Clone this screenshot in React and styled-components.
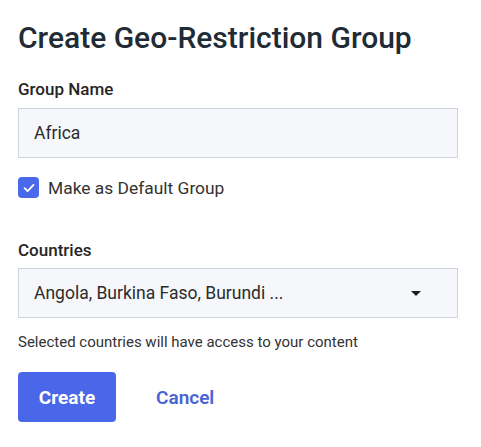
import React from "react";
import styled, { createGlobalStyle } from "styled-components";

const Global = createGlobalStyle`
  html, body { margin: 0; padding: 0; background: #ffffff; }
  body { font-family: Roboto, "Noto Sans", Arial, sans-serif; color: #1f2733; }
  * { box-sizing: border-box; }
`;

const Page = styled.div`
  width: 481px;
  padding: 19px 18px 0 18px;
  display: flex;
  flex-direction: column;
`;

const Title = styled.h1`
  margin: 0;
  font-size: 30px;
  line-height: 38px;
  font-weight: 500;
  color: #212b36;
`;

const Label = styled.label`
  display: block;
  font-size: 17px;
  line-height: 20px;
  font-weight: 500;
  color: #262626;
  margin-top: ${(p) => p.$top}px;
  margin-bottom: ${(p) => p.$bottom}px;
`;

const Field = styled.div`
  width: 440px;
  height: 50px;
  background: #f5f7fa;
  border: 1px solid #cfd5de;
  display: flex;
  align-items: center;
  justify-content: space-between;
  padding: 0 36px 0 15px;
  font-size: 17.5px;
  color: #2c2c2c;
`;

const CheckRow = styled.div`
  display: flex;
  align-items: center;
  gap: 9px;
  margin-top: 19px;
  font-size: 17.4px;
  color: #333;
`;

const Box = styled.span`
  width: 21px;
  height: 21px;
  border-radius: 4px;
  background: #4a68ea;
  display: flex;
  align-items: center;
  justify-content: center;
`;

const Caret = styled.span`
  width: 0;
  height: 0;
  border-left: 5px solid transparent;
  border-right: 5px solid transparent;
  border-top: 5px solid #1f1f1f;
`;

const Help = styled.p`
  margin: 15px 0 0 0;
  font-size: 15px;
  line-height: 18px;
  color: #333;
`;

const Actions = styled.div`
  display: flex;
  align-items: center;
  gap: 40px;
  margin-top: 21px;
`;

const Primary = styled.button`
  width: 98px;
  height: 50px;
  border: none;
  border-radius: 4px;
  background: #4a67ea;
  color: #fff;
  font-family: inherit;
  font-size: 19px;
  font-weight: 700;
  cursor: pointer;
`;

const Link = styled.button`
  border: none;
  background: none;
  padding: 0;
  font-family: inherit;
  font-size: 19px;
  font-weight: 600;
  color: #4a64d4;
  cursor: pointer;
`;

export default function App() {
  return (
    <>
      <Global />
      <Page>
        <Title>Create Geo-Restriction Group</Title>
        <Label $top={22} $bottom={9}>Group Name</Label>
        <Field>Africa</Field>
        <CheckRow>
          <Box>
            <svg width="14" height="14" viewBox="0 0 14 14">
              <path d="M2.6 7.2 L5.6 10.1 L11.5 3.9" fill="none" stroke="#fff" strokeWidth="1.8" strokeLinecap="round" strokeLinejoin="round" />
            </svg>
          </Box>
          <span>Make as Default Group</span>
        </CheckRow>
        <Label $top={42} $bottom={8}>Countries</Label>
        <Field>
          <span>Angola, Burkina Faso, Burundi ...</span>
          <Caret />
        </Field>
        <Help>Selected countries will have access to your content</Help>
        <Actions>
          <Primary>Create</Primary>
          <Link>Cancel</Link>
        </Actions>
      </Page>
    </>
  );
}
